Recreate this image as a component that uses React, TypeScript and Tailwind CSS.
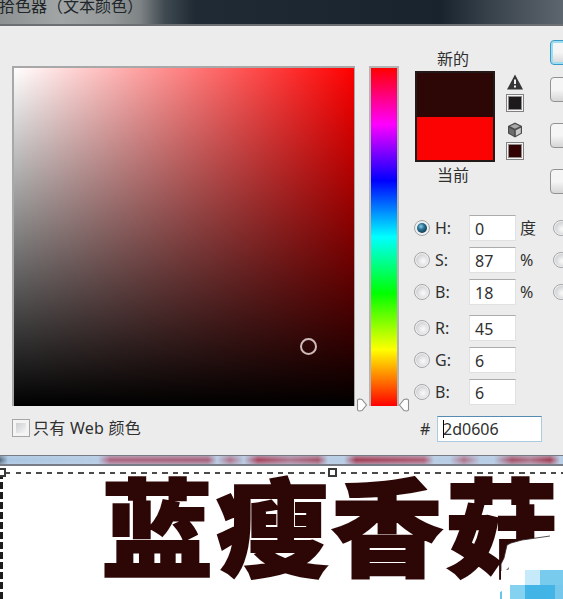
import { useState } from 'react';
import clsx from 'clsx';

const fields = [
  { id: 'H', value: '0', unit: '度', extra: true },
  { id: 'S', value: '87', unit: '%', extra: true },
  { id: 'B', value: '18', unit: '%', extra: true },
  { id: 'R', value: '45' },
  { id: 'G', value: '6' },
  { id: 'B2', value: '6' },
];

const Radio = ({ checked = false }: { checked?: boolean }) => (
  <span className="flex h-4 w-4 shrink-0 items-center justify-center rounded-full border border-[#a3a5a7] bg-[#f0f0f0]">
    <span
      className={clsx(
        'rounded-full',
        checked
          ? 'h-2.5 w-2.5 bg-[radial-gradient(circle_at_40%_35%,#8fd0e8_0%,#2a7295_35%,#12384e_80%)]'
          : 'h-3 w-3 bg-[radial-gradient(circle_at_60%_60%,#f6f6f6_10%,#c6c8ca_90%)]',
      )}
    />
  </span>
);

const Thumb = ({ flip = false }: { flip?: boolean }) => (
  <svg width="12" height="14" viewBox="0 0 12 14" className={clsx(flip && '-scale-x-100')}>
    <path d="M1.5 2.5 Q1.5 1 3.5 1 L6 1.5 L10.5 7 L6 12.5 L3.5 13 Q1.5 13 1.5 11.5 Z" fill="#fdfdfd" stroke="#8c8c8c" strokeWidth="1.1" />
  </svg>
);

const WarningIcon = () => (
  <svg width="18" height="16" viewBox="0 0 18 16">
    <path d="M9 0.5 L17 15.5 H1 Z" fill="#363638" />
    <path d="M8 5.5 H10 V10 H8 Z M8 11.5 H10 V13.5 H8 Z" fill="#f2f2f2" />
  </svg>
);

const CubeIcon = () => (
  <svg width="18" height="18" viewBox="0 0 18 18">
    <path d="M9 1.5 L16 5 V12.5 L9 16.5 L2 12.5 V5 Z" fill="#4c4c4c" />
    <path d="M9 3 L14 5.2 L9 7.8 L4 5.2 Z" fill="#a9a9a9" />
    <path d="M3.2 6.7 L8.2 9.2 V14.7 L3.2 12 Z" fill="#6c6c6c" />
    <path d="M9.8 9.2 L14.8 6.7 V12 L9.8 14.7 Z" fill="#c8c8c8" />
  </svg>
);

const SmallSwatch = ({ className }: { className: string }) => (
  <div className="h-[18px] w-[18px] border border-[#818181] bg-[#f4f4f4] p-px">
    <div className={clsx('h-full w-full border border-[#8f8989]', className)} />
  </div>
);

const DialogButton = ({ className }: { className?: string }) => (
  <button className={clsx('block h-[25px] w-20 shrink-0 rounded border-[1.5px] bg-linear-to-b from-[#f5f5f5] from-50% to-[#d6d6d6]', className)} />
);

const Handle = ({ className }: { className: string }) => (
  <span className={clsx('absolute -top-[5px] h-[9px] w-[9px] border-2 border-[#3a3a3a] bg-white', className)} />
);

const App = () => {
  const [selected, setSelected] = useState('H');

  return (
    <div className="flex h-[599px] w-[563px] flex-col overflow-hidden bg-white font-['Noto_Sans','Noto_Sans_CJK_SC',sans-serif] text-base text-[#303030]">
      {/* Title bar */}
      <header className="h-[26px] shrink-0 border-b-2 border-[#6c7073] bg-[linear-gradient(90deg,#8d9191_0px,#a1a5a5_60px,#959999_110px,#7e8385_140px,#3f4950_165px,#1f2a34_195px,#19232d_440px,#38424b_490px,#5d666f_563px)]">
        <h1 className="-ml-px whitespace-nowrap leading-3 text-[#20262a]">拾色器（文本颜色）</h1>
      </header>

      <main className="flex h-[429px] shrink-0 bg-[#ececec]">
        {/* Colour field */}
        <section className="ml-3 mt-10 w-[343px] shrink-0">
          <div className="relative h-[340px] border-l-2 border-r border-t-2 border-[#a8a8a8] bg-[linear-gradient(to_top,#000,transparent),linear-gradient(to_right,#fff,#f00)]">
            <span className="absolute left-[286px] top-[270px] h-[17px] w-[17px] rounded-full border-2 border-[#cfb9b9]" />
          </div>
          <label className="mt-3 flex h-5 items-center gap-[3px]">
            <span className="h-[18px] w-[18px] border border-[#a4a6a8] bg-[#f4f4f4] p-[3px]">
              <span className="block h-full w-full bg-linear-to-br from-[#ccced0] to-[#f6f6f6]" />
            </span>
            <span className="whitespace-nowrap leading-5 tracking-[0.25px]">只有 Web 颜色</span>
          </label>
        </section>

        {/* Hue slider */}
        <section className="relative ml-3.5 mt-10 h-[340px] w-[30px] shrink-0 border-x-2 border-t-2 border-[#b4b4b4] bg-[linear-gradient(to_bottom,#f00,#f0f,#00f,#0ff,#0f0,#ff0,#f00)]">
          <span className="absolute -bottom-1.5 -left-[15px]"><Thumb /></span>
          <span className="absolute -bottom-1.5 -right-[13px]"><Thumb flip /></span>
        </section>

        <section className="ml-3.5 flex w-[150px] shrink-0 flex-col pt-[23px]">
          <div className="flex h-[139px]">
            <div className="ml-0.5 w-20 text-center leading-5">
              <p className="-ml-1 h-[22px]">新的</p>
              <div className="h-[91px] border-2 border-[#241919]">
                <div className="h-1/2 bg-[#2d0606]" />
                <div className="h-1/2 bg-[#fb0303]" />
              </div>
              <p className="-ml-1 mt-[3px]">当前</p>
            </div>
            <div className="ml-[11px] flex flex-col items-center pt-[25px]">
              <WarningIcon />
              <div className="mt-1"><SmallSwatch className="bg-[#1d1a1c]" /></div>
              <div className="mt-[9px]"><CubeIcon /></div>
              <div className="mt-[3px]"><SmallSwatch className="bg-[#330303]" /></div>
            </div>
          </div>

          <div className="mt-[27px] flex flex-col gap-1.5">
            {fields.map((field) => (
              <label
                key={field.id}
                onClick={() => setSelected(field.id)}
                className={clsx('flex h-[26px] items-center leading-5', field.id === 'R' && 'mt-1')}
              >
                <span className="ml-px shrink-0"><Radio checked={selected === field.id} /></span>
                <span className="ml-[5px] w-[34px] shrink-0">{field.id[0]}:</span>
                <span className="h-[26px] w-[47px] shrink-0 border border-[#e1e1e1] border-t-[#a9abad] bg-white pl-[5px] leading-[26px]">{field.value}</span>
                <span className="ml-1 w-[33px] shrink-0">{field.unit}</span>
                {field.extra && <Radio />}
              </label>
            ))}
          </div>

          <label className="mt-[11px] flex h-[26px] items-center">
            <span className="ml-[7px] w-[17px] leading-5">#</span>
            <span className="flex h-[26px] w-[105px] items-center border border-[#abcbe0] border-t-[#568bb2] bg-white pl-[5px] leading-5">
              <span className="-mr-px h-[18px] w-px bg-black" />
              2d0606
            </span>
          </label>
        </section>

        {/* Buttons run past the window edge */}
        <section className="-ml-[13px] flex w-[13px] shrink-0 flex-col self-start overflow-hidden pt-3.5">
          <DialogButton className="border-[#3d9ac4] bg-[#d8f0fa] shadow-[inset_0_0_0_2px_#9edcf2]" />
          <DialogButton className="mt-3 border-[#929292]" />
          <DialogButton className="mt-[21px] border-[#929292]" />
          <DialogButton className="mt-[21px] border-[#929292]" />
        </section>
      </main>

      {/* Window edge */}
      <div className="h-[11px] shrink-0 overflow-hidden border-b-2 border-t border-[#777c86] bg-[#b6cde5]">
        <div className="h-full bg-[linear-gradient(180deg,#c4d3e680,transparent_50%,#c4d3e680),linear-gradient(90deg,#536779_0px,#a9c6e3_8px,#b6cde5_98px,#ad647e_110px,#a86079_208px,#b6cde5_217px,#ad7188_230px,#b6cde5_244px,#a7415a_258px,#ad7890_290px,#a7536a_318px,#b6cde5_328px,#b6cde5_344px,#a23c53_356px,#ae5c73_424px,#b6cde5_434px,#b6cde5_450px,#ad7188_464px,#b6cde5_480px,#b6cde5_494px,#a44e64_512px,#ae748a_530px,#a13b51_550px,#b6cde5_560px)]" />
      </div>

      {/* Text layer on the canvas */}
      <section className="relative h-[133px] overflow-hidden bg-white">
        <div className="absolute left-0 top-[6px] h-[2px] w-[563px] bg-[repeating-linear-gradient(90deg,transparent_0px,transparent_5px,#4b4b4b_5px,#4b4b4b_10.5px)]" />
        <div className="absolute left-0 top-[6px] h-[127px] w-[3px] bg-[repeating-linear-gradient(180deg,#1c1c1c_0px,#1c1c1c_7px,transparent_7px,transparent_10px)]" />
        <p className="ml-[101px] w-[462px] scale-y-[0.94] whitespace-nowrap font-['Noto_Sans_CJK_SC',sans-serif] text-[112px] font-black leading-[112px] tracking-[3px] text-[#2d0606] [-webkit-text-stroke:2px_#2d0606]">蓝瘦香菇</p>
        <div className="absolute left-0 top-[7px] w-full">
          <Handle className="-left-[3px]" />
          <Handle className="left-[328px]" />
        </div>
        <svg className="absolute bottom-0 right-0" width="63" height="66" viewBox="0 0 63 66">
          <path d="M1 66 V31 L4 25 L7 12 L11 10 L22 7 L50 3 L63 2 V66 Z" fill="#fff" />
          <path d="M1 38 V31 L4 25 L7 12 L11 10 L22 7 L50 3" fill="none" stroke="#302526" strokeWidth="0.8" />
          <path d="M6 37 L9 34 V36 L8 37 Z" fill="#777" />
          <path d="M25 37 H40 V52 H25 Z" fill="#c7eafa" />
          <path d="M40 37 H63 V52 H40 Z" fill="#78cbed" />
          <path d="M10 52 H25 V66 H10 Z" fill="#84d1f0" />
          <path d="M25 52 H55 V66 H25 Z" fill="#43b4e6" />
          <path d="M55 52 H63 V66 H55 Z" fill="#75c8ec" />
          <path d="M0 59 V66 H2 V58 Z" fill="#69c5ec" />
        </svg>
      </section>
    </div>
  );
};

export default App;
